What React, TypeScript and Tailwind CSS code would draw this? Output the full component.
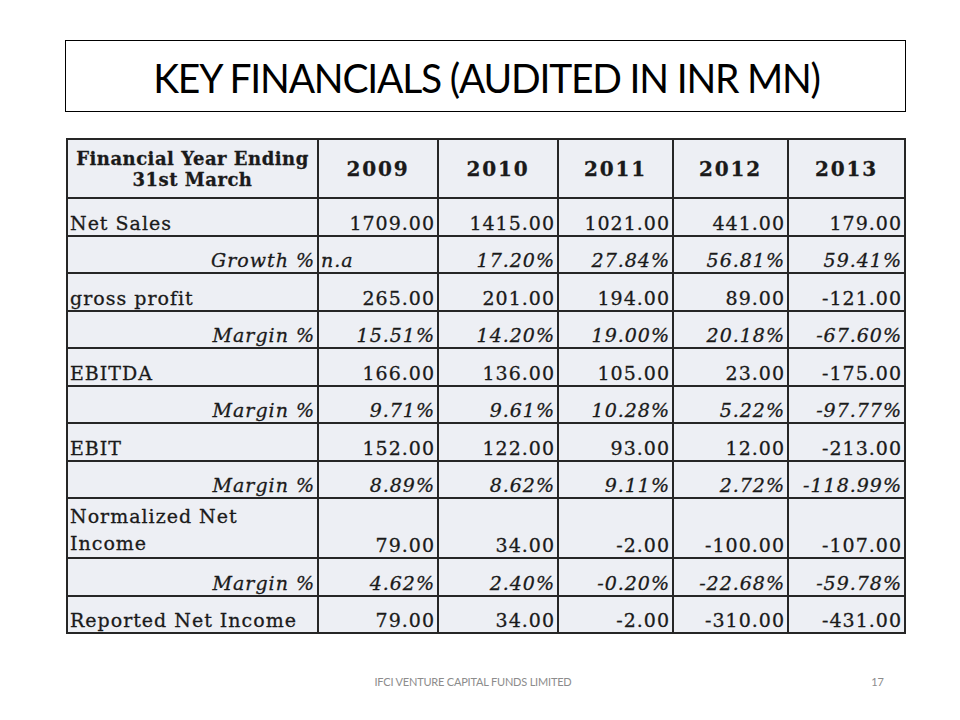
import React from 'react';

type Row = {
  label: React.ReactNode;
  values: string[];
  sub?: boolean;
  tall?: boolean;
};

const YEARS = ['2009', '2010', '2011', '2012', '2013'];

const ROWS: Row[] = [
  { label: 'Net Sales', values: ['1709.00', '1415.00', '1021.00', '441.00', '179.00'] },
  { label: 'Growth %', values: ['n.a', '17.20%', '27.84%', '56.81%', '59.41%'], sub: true },
  { label: 'gross profit', values: ['265.00', '201.00', '194.00', '89.00', '-121.00'] },
  { label: 'Margin %', values: ['15.51%', '14.20%', '19.00%', '20.18%', '-67.60%'], sub: true },
  { label: 'EBITDA', values: ['166.00', '136.00', '105.00', '23.00', '-175.00'] },
  { label: 'Margin %', values: ['9.71%', '9.61%', '10.28%', '5.22%', '-97.77%'], sub: true },
  { label: 'EBIT', values: ['152.00', '122.00', '93.00', '12.00', '-213.00'] },
  { label: 'Margin %', values: ['8.89%', '8.62%', '9.11%', '2.72%', '-118.99%'], sub: true },
  {
    label: (
      <>
        Normalized Net
        <br />
        Income
      </>
    ),
    values: ['79.00', '34.00', '-2.00', '-100.00', '-107.00'],
    tall: true,
  },
  { label: 'Margin %', values: ['4.62%', '2.40%', '-0.20%', '-22.68%', '-59.78%'], sub: true },
  { label: 'Reported Net Income', values: ['79.00', '34.00', '-2.00', '-310.00', '-431.00'] },
];

const cell = 'border-2 border-[#262626] bg-[#edeff4] align-bottom px-[2px] pb-0 leading-[24px]';

export default function App() {
  return (
    <div className="w-[960px] h-[720px] bg-white flex flex-col font-['Lato',sans-serif]">
      <div className="mt-[40px] ml-[65px] w-[841px] h-[72px] border border-black flex items-center justify-center">
        <h1 className="text-[39px] leading-none tracking-[-1.2px] text-black pt-[3px] pl-[2px] scale-y-[1.05]">
          KEY FINANCIALS (AUDITED IN INR MN)
        </h1>
      </div>

      <table className="mt-[26px] ml-[66px] w-[838px] table-fixed border-collapse text-[#1a1a1a] font-['DejaVu_Serif',serif] text-[19px] tracking-[1px] [-webkit-text-stroke:0.3px_#1a1a1a]">
        <colgroup>
          <col className="w-[251px]" />
          <col className="w-[120px]" />
          <col className="w-[120px]" />
          <col className="w-[115px]" />
          <col className="w-[115px]" />
          <col className="w-[117px]" />
        </colgroup>
        <thead>
          <tr className="h-[59px]">
            <th className="border-2 border-[#262626] bg-[#edeff4] text-center font-bold text-[18px] leading-[21px] tracking-[0.5px]">
              Financial Year Ending
              <br />
              31st March
            </th>
            {YEARS.map((y) => (
              <th key={y} className="border-2 border-[#262626] bg-[#edeff4] text-center font-bold text-[20px] tracking-[1.8px]">
                {y}
              </th>
            ))}
          </tr>
        </thead>
        <tbody>
          {ROWS.map((r, i) => (
            <tr key={i} className={r.tall ? 'h-[60px]' : 'h-[37.5px]'}>
              <td className={`${cell} ${r.sub ? 'text-right italic' : 'text-left'} ${r.tall ? 'leading-[27px]' : ''}`}>
                {r.label}
              </td>
              {r.values.map((v, j) => (
                <td
                  key={j}
                  className={`${cell} ${r.sub ? 'italic' : ''} ${v === 'n.a' ? 'text-left' : 'text-right'} whitespace-nowrap`}
                >
                  {v}
                </td>
              ))}
            </tr>
          ))}
        </tbody>
      </table>

      <div className="mt-auto mb-[30px] flex items-center text-[11px] text-[#8c8c8c] font-['Lato',sans-serif]">
        <div className="ml-[318px] w-[310px] text-center tracking-[-0.2px]">IFCI VENTURE CAPITAL FUNDS LIMITED</div>
        <div className="ml-auto mr-[76px]">17</div>
      </div>
    </div>
  );
}
